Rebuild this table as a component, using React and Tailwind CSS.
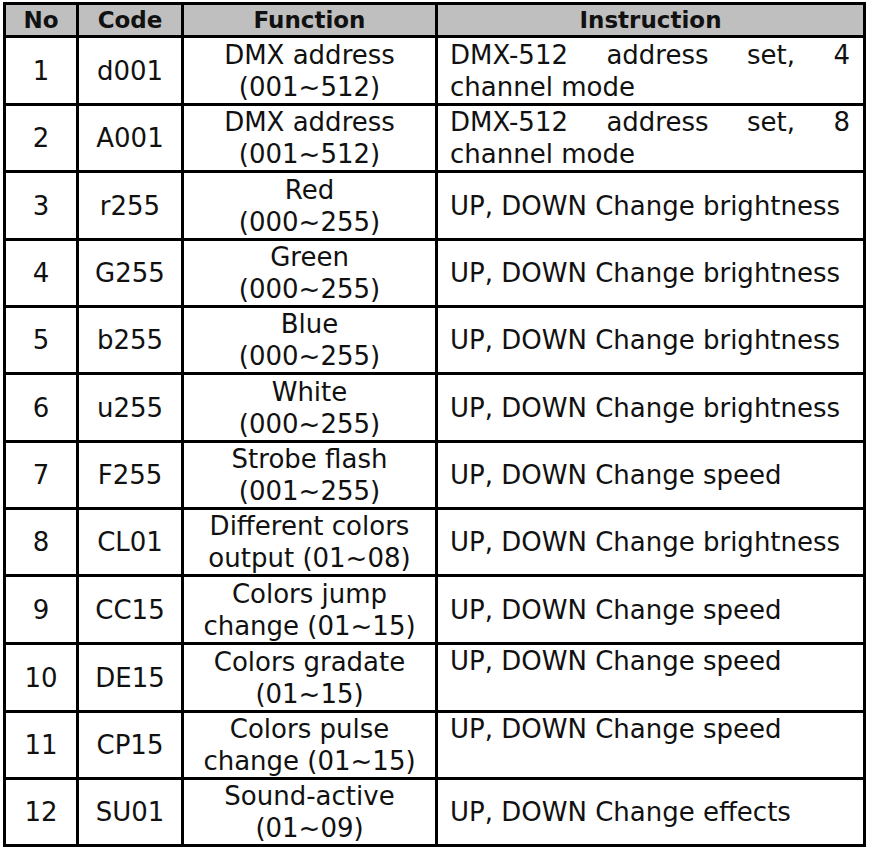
const rows = [
  { no: "1", code: "d001", fn: ["DMX address", "(001~512)"], ins: "DMX-512 address set, 4 channel mode", h: "h-[68px]", justify: true },
  { no: "2", code: "A001", fn: ["DMX address", "(001~512)"], ins: "DMX-512 address set, 8 channel mode", h: "h-[67px]", justify: true },
  { no: "3", code: "r255", fn: ["Red", "(000~255)"], ins: "UP, DOWN Change brightness", h: "h-[68px]" },
  { no: "4", code: "G255", fn: ["Green", "(000~255)"], ins: "UP, DOWN Change brightness", h: "h-[67px]" },
  { no: "5", code: "b255", fn: ["Blue", "(000~255)"], ins: "UP, DOWN Change brightness", h: "h-[67px]" },
  { no: "6", code: "u255", fn: ["White", "(000~255)"], ins: "UP, DOWN Change brightness", h: "h-[68px]" },
  { no: "7", code: "F255", fn: ["Strobe flash", "(001~255)"], ins: "UP, DOWN Change speed", h: "h-[67px]" },
  { no: "8", code: "CL01", fn: ["Different colors", "output (01~08)"], ins: "UP, DOWN Change brightness", h: "h-[67px]" },
  { no: "9", code: "CC15", fn: ["Colors jump", "change (01~15)"], ins: "UP, DOWN Change speed", h: "h-[68px]" },
  { no: "10", code: "DE15", fn: ["Colors gradate", "(01~15)"], ins: "UP, DOWN Change speed", h: "h-[68px]", top: true },
  { no: "11", code: "CP15", fn: ["Colors pulse", "change (01~15)"], ins: "UP, DOWN Change speed", h: "h-[66px]", top: true },
  { no: "12", code: "SU01", fn: ["Sound-active", "(01~09)"], ins: "UP, DOWN Change effects", h: "h-[67px]" },
];

const cell = "border-r-[3px] border-b-[3px] border-black p-0";

export default function App() {
  return (
    <div className="bg-white w-[869px] h-[850px] pl-[3px] pt-[2px] text-[#111] font-['DejaVu_Sans',sans-serif]">
      <table className="table-fixed border-separate border-spacing-0 border-l-[3px] border-t-[3px] border-black w-[863px]">
        <colgroup>
          <col className="w-[73px]" />
          <col className="w-[105px]" />
          <col className="w-[254px]" />
          <col className="w-[428px]" />
        </colgroup>
        <thead>
          <tr className="h-[33px] bg-[#bfbfbf] text-[23px] leading-[30px] font-bold">
            <th className={`${cell} text-center`}>No</th>
            <th className={`${cell} text-center`}>Code</th>
            <th className={`${cell} text-center`}>Function</th>
            <th className={`${cell} text-center`}>Instruction</th>
          </tr>
        </thead>
        <tbody className="text-[26px] leading-[32px]">
          {rows.map((r) => (
            <tr key={r.no} className={r.h}>
              <td className={`${cell} text-center align-middle`}>{r.no}</td>
              <td className={`${cell} text-center align-middle`}>{r.code}</td>
              <td className={`${cell} text-center align-middle`}>
                {r.fn.map((line) => (
                  <div key={line} className="whitespace-nowrap">{line}</div>
                ))}
              </td>
              <td
                className={`${cell} pl-[12px] pr-[13px] ${r.top ? "align-top" : "align-middle"} ${
                  r.justify ? "text-justify" : "text-left"
                }`}
              >
                {r.ins}
              </td>
            </tr>
          ))}
        </tbody>
      </table>
    </div>
  );
}
